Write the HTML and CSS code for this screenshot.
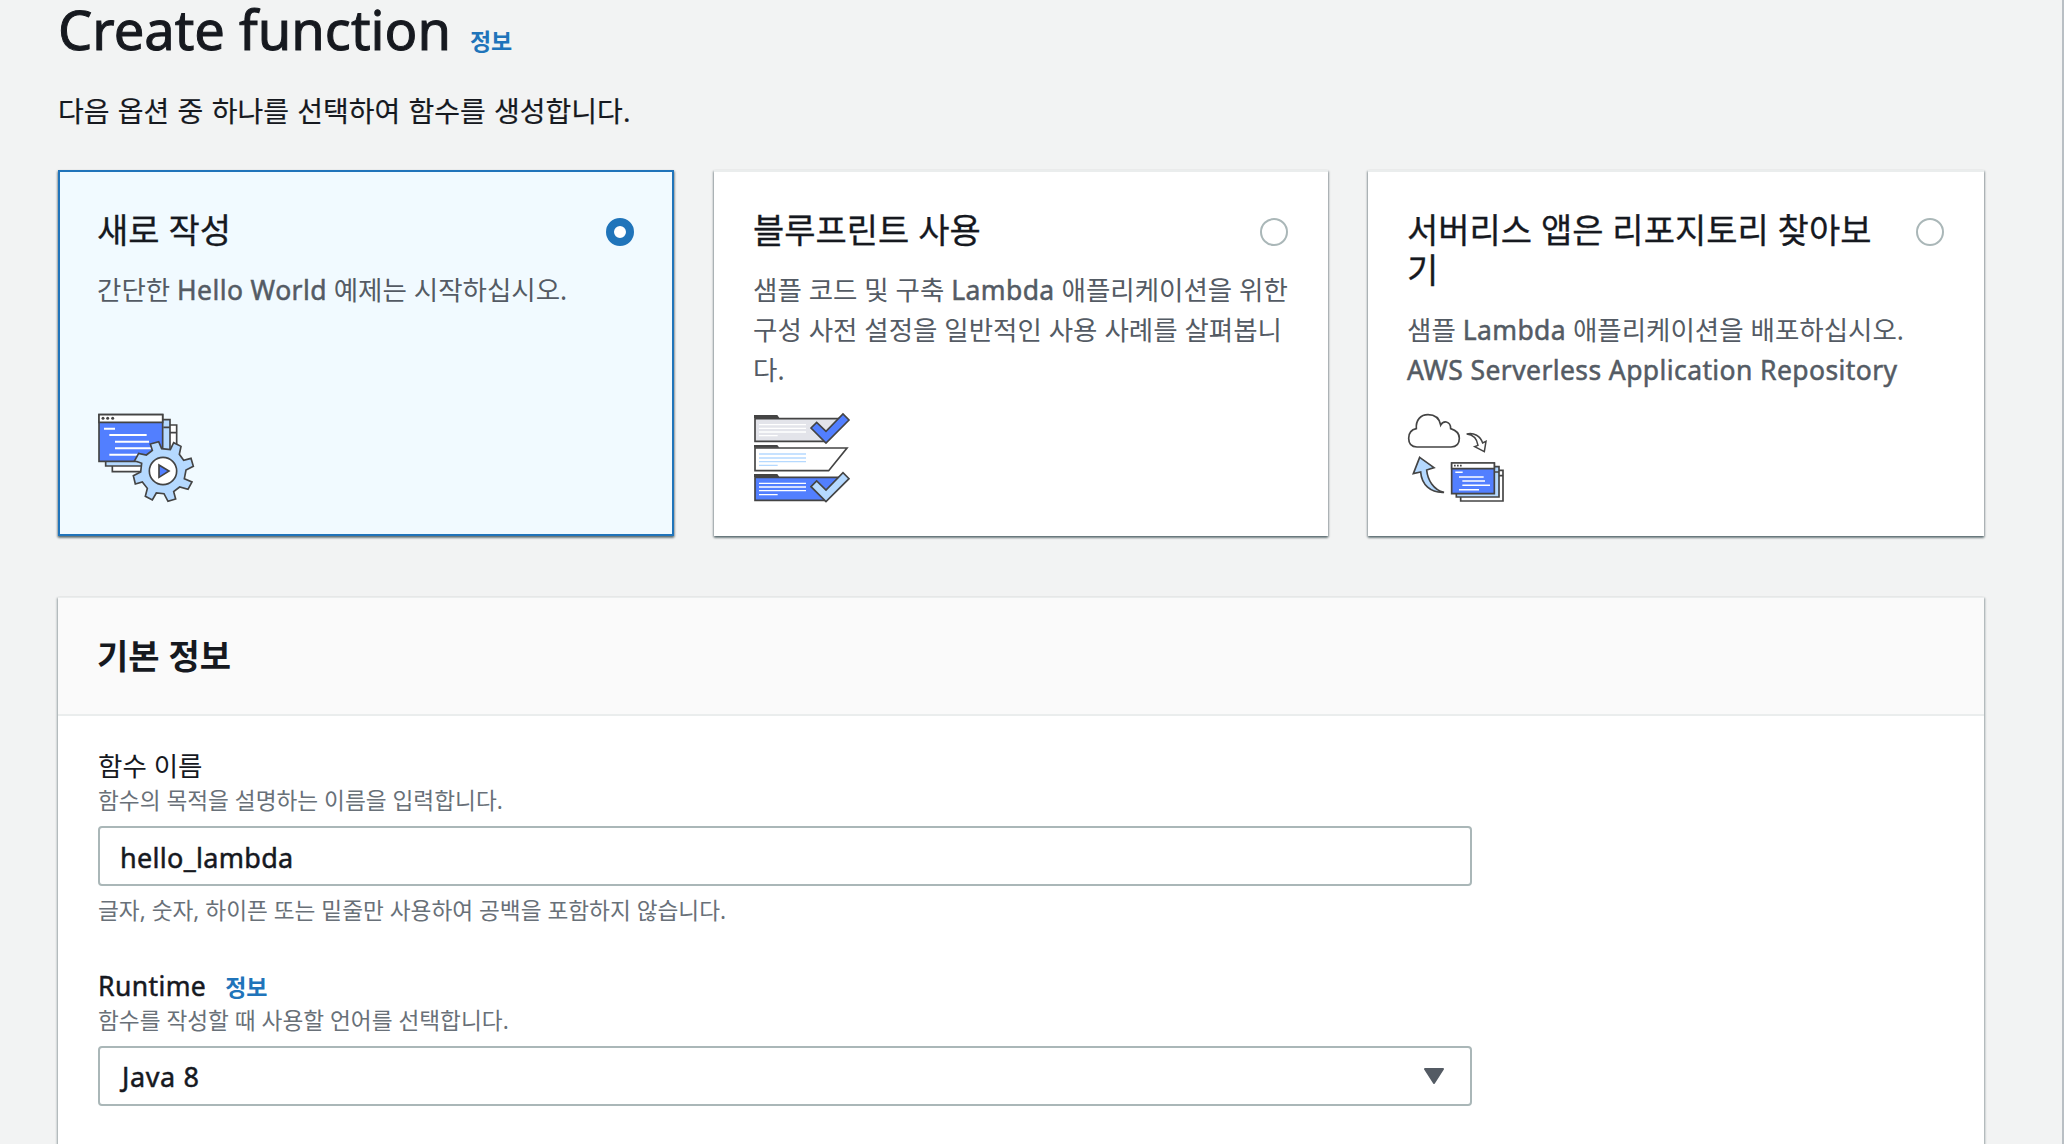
FILE: index.html
```html
<!DOCTYPE html>
<html lang="ko">
<head>
<meta charset="utf-8">
<title>Create function</title>
<link rel="stylesheet" href="styles.css">
</head>
<body>
<main class="page">
  <header class="page-header">
    <h1 class="page-title">Create function</h1>
    <a class="info-link">정보</a>
  </header>
  <p class="page-description">다음 옵션 중 하나를 선택하여 함수를 생성합니다.</p>

  <section class="tiles">
    <label class="tile tile-selected">
      <span class="tile-head"><span class="tile-title">새로 작성</span><span class="radio radio-checked"></span></span>
      <span class="tile-text">간단한 <span class="latin">Hello World</span> 예제는 시작하십시오.</span>
      <svg class="tile-icon" viewBox="54 39 300 270" stroke="#444" stroke-width="5">
        <path fill="#fff" d="M97 75H290V215H97ZM270 98H290"/>
        <path fill="#b5d9ff" d="M77 59H270V198H77ZM250 82H270"/>
        <path fill="#527fff" d="M57 44H248V184H57Z"/>
        <path fill="#fff" d="M57 44H248V67H57Z"/>
        <g fill="#444" stroke="none"><circle cx="69" cy="55" r="4.5"/><circle cx="83" cy="55" r="4.5"/><circle cx="98" cy="55" r="4.5"/></g>
        <path fill="none" stroke="#fff" stroke-width="6" d="M72 86H105M88 105H200M105 125H207M105 145H216M88 164H180"/>
        <path fill="#b5d9ff" d="M211 132L236 125L245 146L271 149L281 128L303 139L298 163L311 181L333 175L340 199L318 210L313 236L336 246L324 268L299 261L281 275L287 297L264 304L252 281L229 279L217 300L196 289L202 265L187 246L166 252L160 227L182 216L185 190L164 182L176 160L199 165L217 151Z"/>
        <circle cx="249" cy="213" r="41" fill="#fff"/>
        <path fill="#527fff" d="M237 195V232L267 213Z"/>
      </svg>
    </label>
    <label class="tile">
      <span class="tile-head"><span class="tile-title">블루프린트 사용</span><span class="radio"></span></span>
      <span class="tile-text">샘플 코드 및 구축 <span class="latin">Lambda</span> 애플리케이션을 위한 구성 사전 설정을 일반적인 사용 사례를 살펴봅니다.</span>
      <svg class="tile-icon" viewBox="42 39 300 270" stroke="#444" stroke-width="5">
        <path fill="#e3e4ea" d="M45 56H301L258 124H45Z"/>
        <path fill="#444" stroke="none" d="M42 45H112L118 54H42Z"/>
        <path fill="none" stroke="#fff" stroke-width="4" d="M57 74H198M57 85H198M57 96H198M57 107H113"/>
        <path fill="#527fff" d="M213 84L230 67L258 94L309 42L327 60L258 129Z"/>
        <path fill="#fff" d="M45 144H321L266 212H45Z"/>
        <path fill="#444" stroke="none" d="M42 135H112L118 143H42Z"/>
        <path fill="none" stroke="#b5d9ff" stroke-width="4" d="M57 162H198M57 174H198M57 185H198M57 196H113"/>
        <path fill="#527fff" d="M45 232H301L258 301H45Z"/>
        <path fill="#444" stroke="none" d="M42 222H112L118 231H42Z"/>
        <path fill="none" stroke="#fff" stroke-width="4" d="M57 250H198M57 261H198M57 272H198M57 284H113"/>
        <path fill="#b5d9ff" d="M213 260L230 243L258 270L309 218L327 236L258 305Z"/>
      </svg>
    </label>
    <label class="tile">
      <span class="tile-head"><span class="tile-title">서버리스 앱은 리포지토리 찾아보기</span><span class="radio"></span></span>
      <span class="tile-text">샘플 <span class="latin">Lambda</span> 애플리케이션을 배포하십시오. <span class="latin">AWS Serverless Application Repository</span></span>
      <svg class="tile-icon" viewBox="39 39 300 270" stroke="#444" stroke-width="5">
        <path fill="#fff" d="M66 141C49 141 41 130 41 115C41 100 49 89 64 86C62 60 77 44 99 44C119 44 133 55 137 75C142 66 148 65 154 66C163 68 167 76 167 86C184 91 193 101 193 115C193 131 184 141 168 141Z"/>
        <path fill="#fff" stroke-width="4.500" d="M215 102C237 97 256 108 263 129L273 124L268 155L239 140L249 136C246 117 236 104 215 102Z"/>
        <path fill="#b5d9ff" d="M74 172L117 203L95 210C98 240 115 269 147 277C106 279 80 254 77 216L55 221Z"/>
        <path fill="#fff" d="M197 211H324V303H197ZM312 227H324"/>
        <path fill="#b5d9ff" d="M184 200H312V291H184ZM299 216H312"/>
        <path fill="#527fff" d="M170 189H298V281H170Z"/>
        <path fill="#fff" d="M170 189H298V206H170Z"/>
        <path fill="none" stroke-width="5" stroke-dasharray="5 4" d="M177 197H201"/>
        <path fill="none" stroke="#fff" stroke-width="4.500" d="M181 217H203M192 231H266M202 243H270M202 256H285M192 269H252"/>
      </svg>
    </label>
  </section>

  <section class="panel">
    <div class="panel-header"><h2 class="panel-title">기본 정보</h2></div>
    <div class="panel-body">
      <div class="field">
        <div class="field-label">함수 이름</div>
        <div class="field-hint">함수의 목적을 설명하는 이름을 입력합니다.</div>
        <div class="control control-input">hello_lambda</div>
        <div class="field-constraint">글자, 숫자, 하이픈 또는 밑줄만 사용하여 공백을 포함하지 않습니다.</div>
      </div>
      <div class="field">
        <div class="field-label"><span class="latin">Runtime</span> <a class="info-link">정보</a></div>
        <div class="field-hint">함수를 작성할 때 사용할 언어를 선택합니다.</div>
        <div class="control control-select">Java 8
          <svg class="caret" viewBox="0 0 20 16"><path fill="#545b64" stroke="#545b64" stroke-width="2" stroke-linejoin="round" d="M1 1H19L10 15Z"/></svg>
        </div>
      </div>
    </div>
  </section>
</main>
</body>
</html>
```
FILE: styles.css
```css
* { box-sizing: border-box; }

body {
  margin: 0;
  height: 1144px;
  overflow: hidden;
  background: #f2f3f3;
  color: #16191f;
  font-family: "Noto Sans", "Noto Sans CJK KR", sans-serif;
  font-size: 26.5px;
}

.page {
  height: 1144px;
  padding: 0 78px 0 58px;
  border-right: 2px solid #b9bfc4;
}

.page-header {
  display: flex;
  align-items: baseline;
  gap: 19px;
  height: 90px;
}

.page-title {
  margin: 0;
  font-size: 54.3px;
  font-weight: 400;
  line-height: 58px;
  -webkit-text-stroke: 1px currentColor;
}

.latin {
  letter-spacing: .4px;
  -webkit-text-stroke: .5px currentColor;
}

.info-link {
  color: #2074ba;
  font-size: 23px;
  font-weight: 700;
}

.page-description {
  margin: 0;
  height: 80px;
  font-size: 28px;
  line-height: 42px;
  word-spacing: 1px;
  -webkit-text-stroke: .2px currentColor;
}

.tiles {
  display: grid;
  grid-template-columns: 616px 614px 616px;
  gap: 40px;
  height: 366px;
}

.tile {
  display: flex;
  flex-direction: column;
  padding: 42px 40px 33px;
  background: #fff;
  border-top: 2px solid #eaeded;
  box-shadow: 0 2px 2px rgba(0, 28, 36, .4), 1px 1px 2px rgba(0, 28, 36, .25), -1px 1px 2px rgba(0, 28, 36, .25);
}

.tile-selected {
  padding: 42px 38px 31px;
  background: #f1faff;
  border: 2px solid #2074ba;
}

.tile-head {
  display: flex;
  gap: 20px;
  justify-content: space-between;
  margin-top: -4px;
}

.tile-title {
  margin-left: -1px;
  font-size: 34px;
  line-height: 40px;
  -webkit-text-stroke: .3px currentColor;
}

.radio {
  flex: none;
  width: 28px;
  height: 28px;
  margin-top: 8px;
  border: 2px solid #aab7b8;
  border-radius: 50%;
  background: #fff;
}

.radio-checked { border: 8px solid #2074ba; }

.tile-text {
  margin: 20px -8px 0 -1px;
  color: #545b64;
  line-height: 40px;
}

.tile-icon {
  width: 100px;
  height: 90px;
  margin-top: auto;
  overflow: visible;
}

.panel {
  height: 600px;
  margin-top: 61px;
  background: #fff;
  border-top: 1px solid #eaeded;
  box-shadow: 1px 1px 2px rgba(0, 28, 36, .35), -1px 1px 2px rgba(0, 28, 36, .35);
}

.panel-header {
  display: flex;
  align-items: center;
  height: 118px;
  padding: 0 39px;
  background: #fafafa;
  border-bottom: 2px solid #eaeded;
}

.panel-title {
  margin: 0;
  font-size: 34px;
  font-weight: 700;
  line-height: 44px;
}

.panel-body {
  display: flex;
  flex-direction: column;
  gap: 40px;
  width: 1454px;
  padding: 30px 40px;
}

.field-label {
  display: flex;
  align-items: baseline;
  gap: 19px;
  height: 40px;
  line-height: 40px;
}

.field-hint,
.field-constraint {
  color: #687078;
  font-size: 22.67px;
  line-height: 30px;
}

.field-constraint { margin-top: 10px; }

.control {
  display: flex;
  align-items: center;
  justify-content: space-between;
  height: 60px;
  margin-top: 10px;
  padding: 0 26px 0 20px;
  border: 2px solid #aab7b8;
  border-radius: 4px;
  background: #fff;
  font-size: 27px;
  letter-spacing: .3px;
  -webkit-text-stroke: .5px currentColor;
}

.control-input { padding-top: 2px; }

.control-select {
  padding-left: 22px;
  letter-spacing: .6px;
}

.caret {
  width: 20px;
  height: 16px;
}
```
